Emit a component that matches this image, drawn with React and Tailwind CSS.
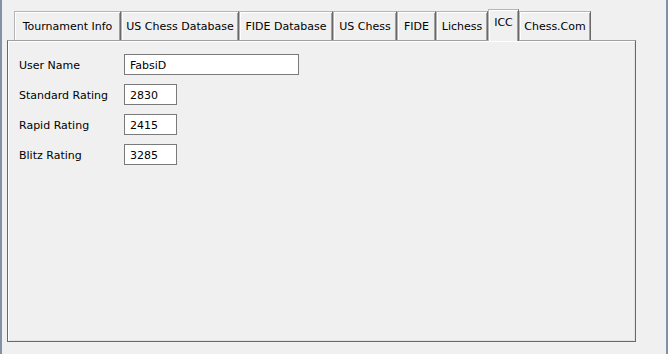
import React, { useState } from 'react';

const tabs = [
  { label: 'Tournament Info', w: 'w-[107px]' },
  { label: 'US Chess Database', w: 'w-[118px]' },
  { label: 'FIDE Database', w: 'w-[94px]' },
  { label: 'US Chess', w: 'w-[64px]' },
  { label: 'FIDE', w: 'w-[39px]' },
  { label: 'Lichess', w: 'w-[52px]' },
  { label: 'ICC', w: 'w-[31px]' },
  { label: 'Chess.Com', w: 'w-[72px]' },
];

const fields = [
  { label: 'User Name', value: 'FabsiD', w: 'w-[175px]' },
  { label: 'Standard Rating', value: '2830', w: 'w-[53px]' },
  { label: 'Rapid Rating', value: '2415', w: 'w-[53px]' },
  { label: 'Blitz Rating', value: '3285', w: 'w-[53px]' },
];

const App = () => {
  const [active, setActive] = useState('ICC');
  const [values, setValues] = useState(fields.map((f) => f.value));

  return (
    <div className="w-[668px] h-[354px] bg-[#f0f0f0] border-x-2 border-[#8391a7] pl-[5px] pt-[9px] text-[11px] text-black font-['DejaVu_Sans',sans-serif] overflow-hidden">
      {/* Tab strip */}
      <div className="flex items-end h-[31px] pl-[7px] relative z-10">
        {tabs.map((tab) => {
          const selected = tab.label === active;
          return (
            <button
              key={tab.label}
              onClick={() => setActive(tab.label)}
              className={`${tab.w} flex justify-center border-t border-l border-r border-t-[#b5b5b5] border-l-[#b5b5b5] border-r-[#696969] bg-[#f0f0f0] shadow-[inset_1px_1px_0_#ffffff,inset_-1px_0_0_#a0a0a0] ${
                selected ? 'h-[32px] -mb-px pt-[5px]' : 'h-[29px] pt-[7px]'
              }`}
            >
              {tab.label}
            </button>
          );
        })}
      </div>

      {/* Panel */}
      <div className="w-[629px] h-[302px] border border-t-[#a0a0a0] border-l-[#696969] border-r-[#696969] border-b-[#696969] shadow-[inset_1px_1px_0_#ffffff,inset_-1px_-1px_0_#e3e3e3] pl-[11px] pt-[13px]">
        <div className="flex flex-col gap-[9px]">
          {fields.map((field, i) => (
            <div key={field.label} className="flex items-center h-[21px]">
              <span className="w-[105px] pt-[3px]">{field.label}</span>
              <input
                value={values[i]}
                onChange={(e) => {
                  const next = [...values];
                  next[i] = e.target.value;
                  setValues(next);
                }}
                className={`${field.w} h-[21px] bg-white border border-[#7a7a7a] pl-[5px] pt-px outline-none text-[11px]`}
              />
            </div>
          ))}
        </div>
      </div>
    </div>
  );
};

export default App;
